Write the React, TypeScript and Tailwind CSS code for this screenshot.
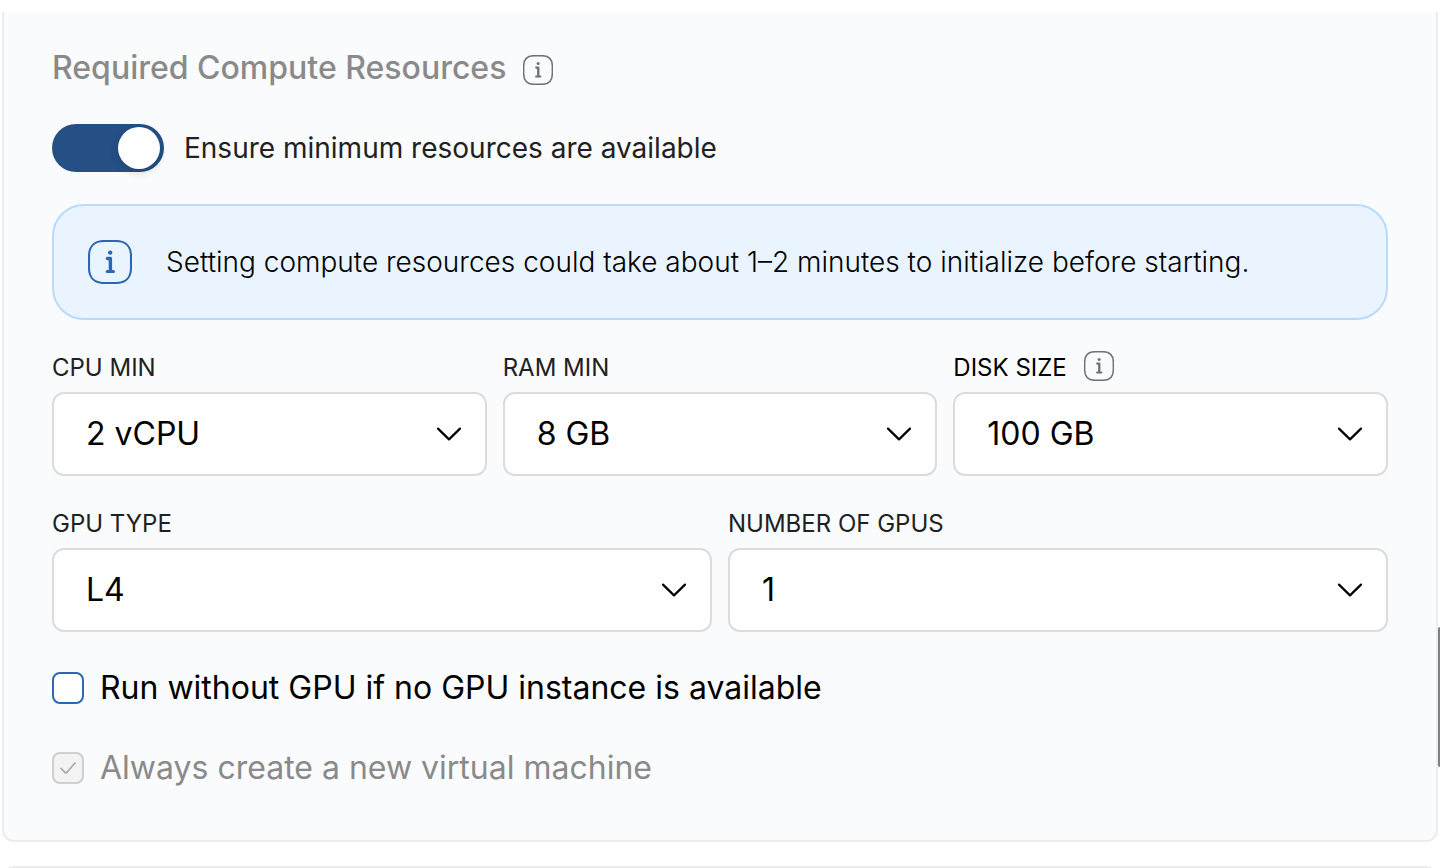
import type { ReactNode } from "react";

function InfoIcon({ className }: { className: string }) {
  return (
    <svg viewBox="0 0 44 44" fill="none" stroke="currentColor" className={className} aria-hidden="true">
      <path
        d="M1 16C1 6.5 6.5 1 16 1H28C37.500 1 43 6.500 43 16V28C43 37.500 37.500 43 28 43H16C6.500 43 1 37.500 1 28Z"
        strokeWidth="2.1"
      />
      <circle cx="22.200" cy="12.600" r="2.200" fill="currentColor" stroke="none" />
      <path d="M19.400 18.500h3v12.500" strokeWidth="3.400" strokeLinecap="round" strokeLinejoin="round" />
      <path d="M19.200 31.500h6.200" strokeWidth="3" strokeLinecap="round" />
    </svg>
  );
}

type SelectFieldProps = {
  id: string;
  label: string;
  options: string[];
  labelClass?: string;
  extra?: ReactNode;
};

function SelectField({ id, label, options, labelClass = "text-[#212121]", extra }: SelectFieldProps) {
  return (
    <div className="flex min-w-0 flex-1 flex-col gap-2">
      <div className="flex h-8 items-center gap-[17px]">
        <label htmlFor={id} className={`text-2xl ${labelClass}`}>
          {label}
        </label>
        {extra}
      </div>
      <div className="relative">
        <select
          id={id}
          className="h-21 w-full appearance-none rounded-xl border-2 border-[#dcdcdc] bg-white pr-20 pl-8 text-[32px] text-black"
        >
          {options.map((option) => (
            <option key={option}>{option}</option>
          ))}
        </select>
        <svg
          viewBox="0 0 28 16"
          fill="none"
          stroke="black"
          strokeWidth="2.2"
          strokeLinecap="round"
          strokeLinejoin="round"
          className="pointer-events-none absolute top-1/2 right-6 h-4 w-7 -translate-y-1/2"
          aria-hidden="true"
        >
          <path d="M3 2.6 14 13.4 25 2.6" />
        </svg>
      </div>
    </div>
  );
}

export default function App() {
  return (
    <div className="relative flex h-screen flex-col gap-6 overflow-hidden bg-white px-0.5 pt-3 font-['Inter',sans-serif]">
      <main className="shrink-0 rounded-b-xl border-2 border-t-0 border-[#ededed] bg-[#fafbfd] px-12 pt-8 pb-12">
        <div className="flex h-12 items-center gap-[17px]">
          <h1 className="text-[32px] font-medium text-[#8a8a8a]">Required Compute Resources</h1>
          <button type="button" aria-label="About compute resources" className="pt-1 text-[#707070]">
            <InfoIcon className="size-[30px]" />
          </button>
        </div>

        <label className="mt-8 flex h-12 items-center gap-5 text-[28px] text-[#212121]">
          <span className="grid h-12 w-28 shrink-0 items-center">
            <input
              type="checkbox"
              role="switch"
              defaultChecked
              className="peer col-start-1 row-start-1 h-12 w-28 appearance-none rounded-full bg-[#bdbdbd] checked:bg-[#254f85]"
            />
            <span className="pointer-events-none col-start-1 row-start-1 ml-1 size-[42px] justify-self-start rounded-full bg-white shadow-[0_4px_8px_rgba(0,35,11,0.15)] peer-checked:mr-1 peer-checked:justify-self-end" />
          </span>
          Ensure minimum resources are available
        </label>

        <div className="mt-8 flex h-29 items-center gap-8.5 rounded-[32px] border-2 border-[#badafb] bg-[#e9f4ff] px-8.5 text-[#2c66b4]">
          <InfoIcon className="size-11 shrink-0" />
          <p className="text-[28px] font-light text-black">
            Setting compute resources could take about 1–2 minutes to initialize before starting.
          </p>
        </div>

        <div className="mt-8 flex gap-4">
          <SelectField id="cpu" label="CPU MIN" options={["2 vCPU", "4 vCPU", "8 vCPU"]} />
          <SelectField id="ram" label="RAM MIN" options={["8 GB", "16 GB", "32 GB"]} />
          <SelectField
            id="disk"
            label="DISK SIZE"
            labelClass="text-black"
            options={["100 GB", "200 GB", "500 GB"]}
            extra={
              <button type="button" aria-label="About disk size" className="pb-1 text-[#707070]">
                <InfoIcon className="size-[30px]" />
              </button>
            }
          />
        </div>

        <div className="mt-8 flex gap-4">
          <SelectField id="gpu-type" label="GPU TYPE" options={["L4", "T4", "A100"]} />
          <SelectField id="gpu-count" label="NUMBER OF GPUS" options={["1", "2", "4"]} />
        </div>

        <label className="mt-8 flex h-12 items-center gap-4 text-[32px] text-black">
          <input
            type="checkbox"
            className="size-8 shrink-0 appearance-none rounded-lg border-2 border-[#2c66b4] bg-white checked:bg-[#2c66b4]"
          />
          Run without GPU if no GPU instance is available
        </label>

        <label className="mt-8 flex h-12 items-center gap-4 text-[32px] text-[#8a8a8a]">
          <span className="grid size-8 shrink-0 place-items-center">
            <input
              type="checkbox"
              defaultChecked
              disabled
              className="col-start-1 row-start-1 size-8 appearance-none rounded-lg border-2 border-[#cfcfcf] bg-[#f3f3f3]"
            />
            <svg
              viewBox="0 0 16 12"
              fill="none"
              stroke="#adadad"
              strokeWidth="1.8"
              strokeLinecap="round"
              strokeLinejoin="round"
              className="pointer-events-none col-start-1 row-start-1 h-3 w-4"
              aria-hidden="true"
            >
              <path d="M1 6.4 5.2 10.6Q6 11.3 6.8 10.4L15 1" />
            </svg>
          </span>
          Always create a new virtual machine
        </label>
      </main>

      <section className="min-h-4 shrink-0 rounded-t-xl border-2 border-b-0 border-[#ededed] bg-[#fafbfd]" />

      <div className="absolute top-[627px] right-0 h-35 w-0.5 rounded-l-full bg-[#7f7f7f]" />
    </div>
  );
}
